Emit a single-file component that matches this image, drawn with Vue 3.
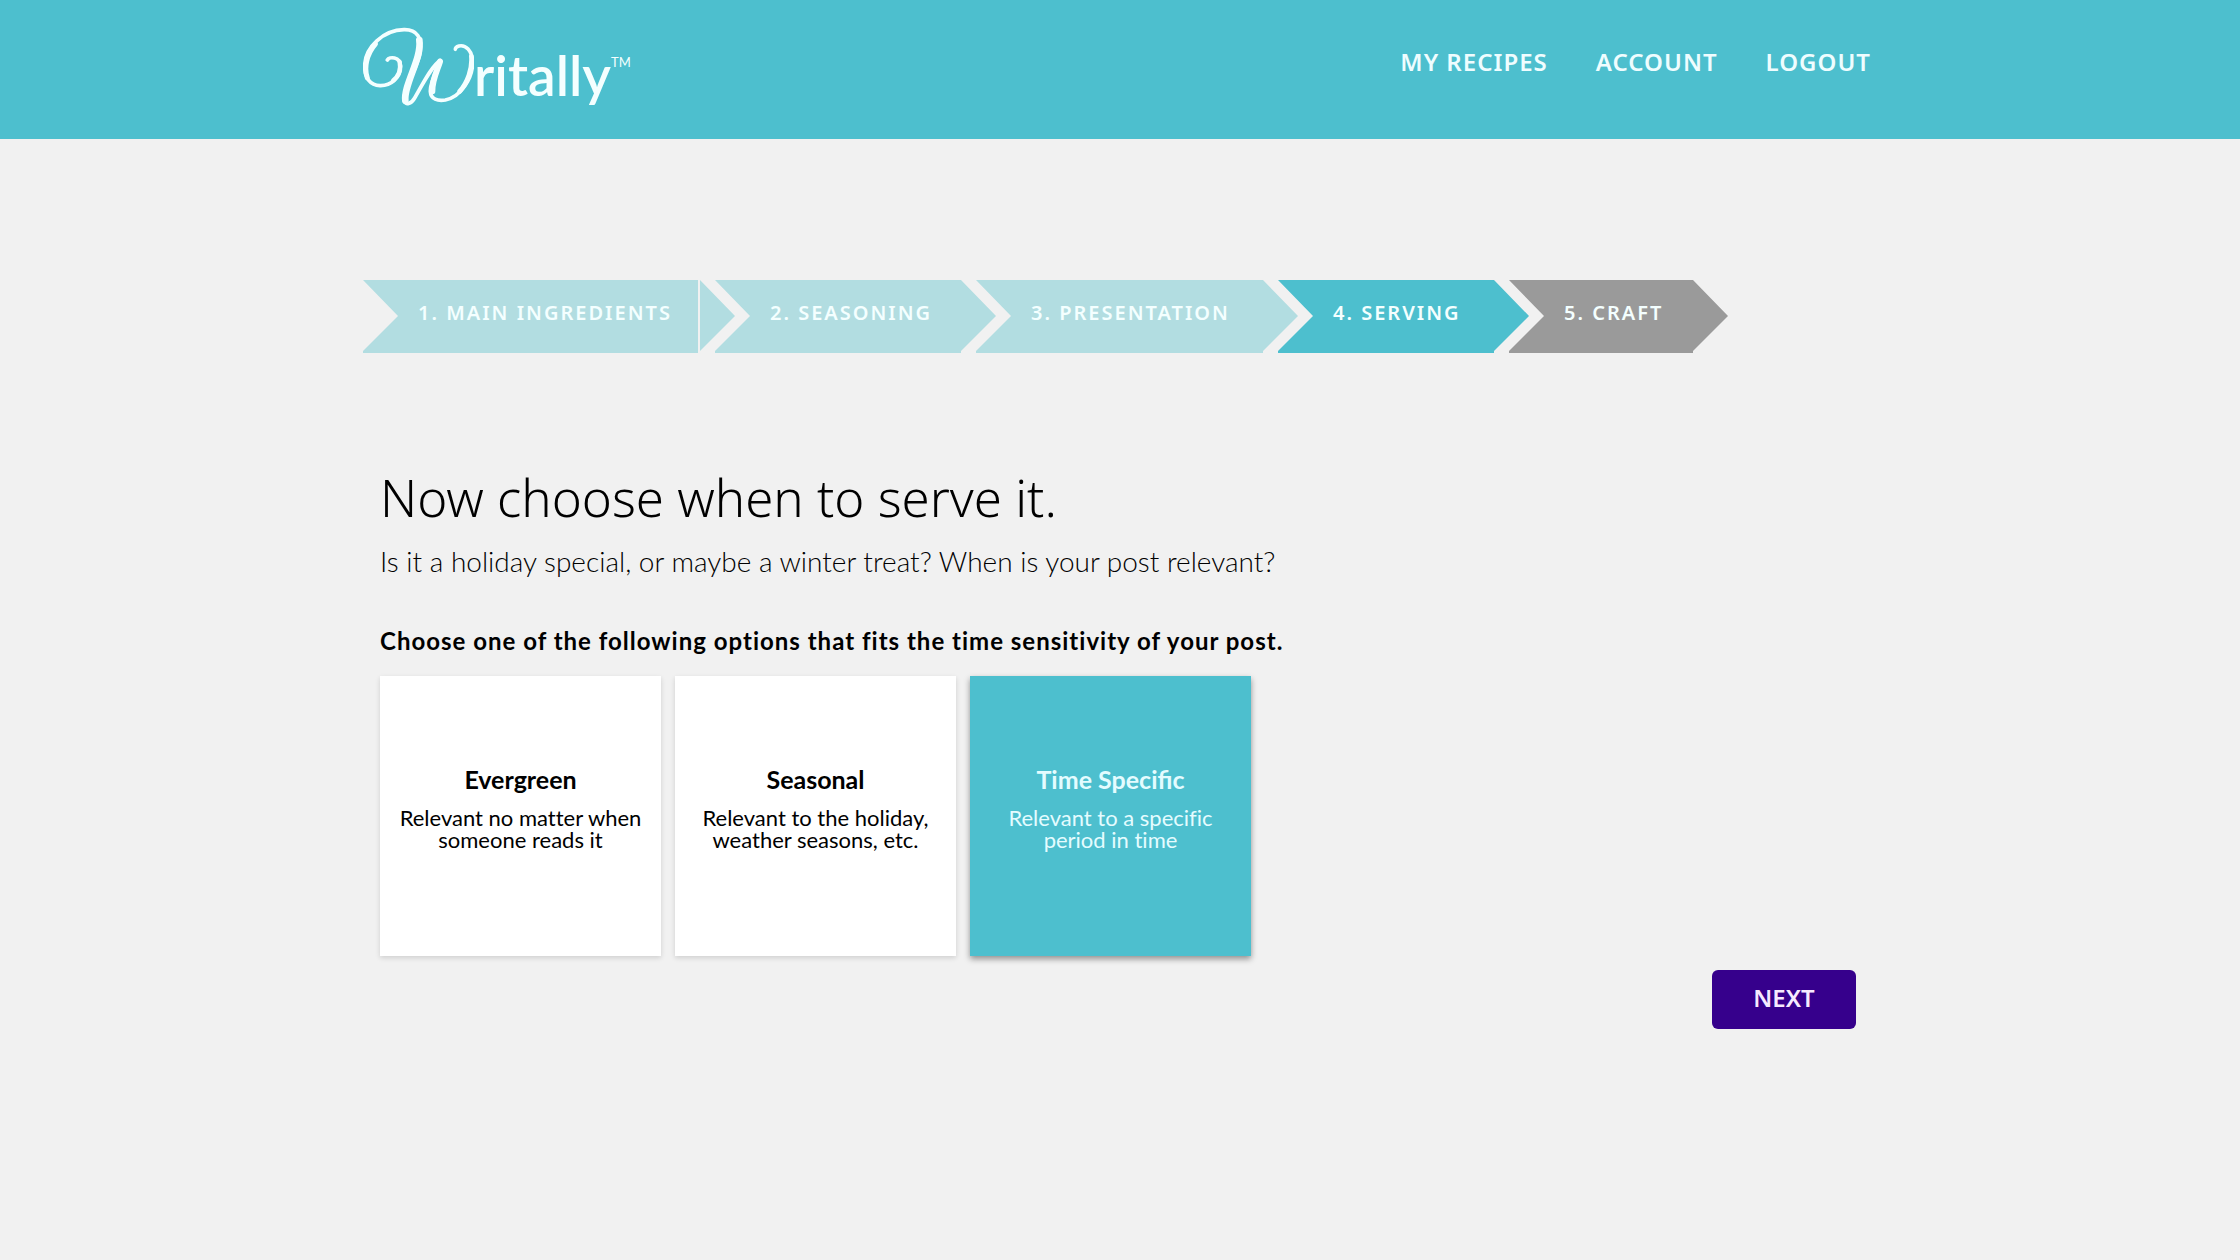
<script setup>
import { ref } from 'vue'

const links = ['My Recipes', 'Account', 'Logout']
const steps = [
  { label: '1. Main Ingredients', state: 'done', size: 'xl', divided: true },
  { label: '2. Seasoning', state: 'done', size: 'md' },
  { label: '3. Presentation', state: 'done', size: 'lg' },
  { label: '4. Serving', state: 'current', size: 'sm' },
  { label: '5. Craft', state: 'upcoming', size: 'xs' },
]
const options = [
  { id: 'evergreen', title: 'Evergreen', text: 'Relevant no matter when someone reads it' },
  { id: 'seasonal', title: 'Seasonal', text: 'Relevant to the holiday, weather seasons, etc.' },
  { id: 'specific', title: 'Time Specific', text: 'Relevant to a specific period in time' },
]
const chosen = ref('specific')
</script>

<template>
  <div class="page">
    <header class="bar">
      <div class="wrap bar-inner">
        <a class="logo" href="#" aria-label="Writally home">
          <svg class="swash" viewBox="15 0 333 270" aria-hidden="true">
            <!-- pen line -->
            <path stroke-width="11" d="M88 114C94 103 126 103 128 132C128 168 98 192 66 191C36 190 20 166 20 134C20 74 78 24 138 23C178 22 192 48 187 90C182 130 134 205 138 234C142 252 160 246 170 228C192 190 222 130 247 115C238 140 216 180 217 208C218 232 240 238 262 234C310 224 344 168 344 120C343 84 322 68 303 72C296 74 292 78 292 82" />
            <!-- broad parts of the stroke -->
            <path stroke-width="15" d="M28 168C18 140 24 98 52 66" />
            <path stroke-width="20" d="M184 54C192 110 136 190 142 236" />
            <path stroke-width="18" d="M246 119C238 145 222 175 223 208" />
            <path stroke-width="14" d="M340 102C344 140 328 182 305 208" />
            <path stroke-width="13" d="M125 120C130 145 118 165 105 176" />
          </svg>
          <span class="word">ritally</span><span class="tm">TM</span>
        </a>
        <nav class="nav">
          <a v-for="link in links" :key="link" href="#">{{ link }}</a>
        </nav>
      </div>
    </header>

    <main class="wrap">
      <ol class="steps">
        <li
          v-for="step in steps"
          :key="step.label"
          :class="['step', step.state, step.size, { divided: step.divided }]"
        >
          {{ step.label }}
        </li>
      </ol>

      <form class="content" @submit.prevent>
        <h1>Now choose when to serve it.</h1>
        <p class="lead">Is it a holiday special, or maybe a winter treat? When is your post relevant?</p>
        <fieldset>
          <legend>Choose one of the following options that fits the time sensitivity of your post.</legend>
          <div class="cards">
            <label v-for="o in options" :key="o.id" :class="['card', { active: chosen === o.id }]">
              <input v-model="chosen" type="radio" name="timing" :value="o.id" />
              <span class="card-title">{{ o.title }}</span>
              <span class="card-text">{{ o.text }}</span>
            </label>
          </div>
        </fieldset>
        <div class="actions">
          <button type="submit">Next</button>
        </div>
      </form>
    </main>
  </div>
</template>

<style>
body {
  background: #f1f1f1;
}
</style>

<style scoped>
.page {
  font-family: Lato, "Open Sans", sans-serif;
  color: #000;
}
.wrap {
  box-sizing: border-box;
  max-width: 1514px;
  margin: 0 auto;
}
.bar {
  background: #4dbfce;
}
.bar-inner {
  display: flex;
  justify-content: space-between;
  align-items: flex-start;
  min-height: 139px;
}
.logo {
  display: flex;
  align-items: flex-start;
  padding-top: 22px;
  color: #f4ffff;
  text-decoration: none;
}
.swash {
  width: 111px;
  height: 90px;
}
.swash path {
  fill: none;
  stroke: #f4ffff;
  stroke-linecap: round;
  stroke-linejoin: round;
}
.word {
  font-size: 55px;
  font-weight: 600;
  line-height: 106px;
}
.tm {
  font-size: 13px;
  line-height: 80px;
}
.nav {
  display: flex;
  gap: 48px;
  padding: 46px 6px 0 0;
}
.nav a {
  font-family: "Noto Sans", "Open Sans", sans-serif;
  font-size: 24px;
  font-weight: 600;
  line-height: 32px;
  letter-spacing: 1px;
  text-transform: uppercase;
  text-decoration: none;
  color: #effdff;
}
.steps {
  display: flex;
  gap: 15px;
  margin: 141px 0 0;
  padding: 0;
  list-style: none;
}
.step {
  --tip: 35px;
  box-sizing: border-box;
  flex: none;
  height: 73px;
  margin-right: calc(-1 * var(--tip));
  padding-left: 55px;
  font-family: "Noto Sans", "Open Sans", sans-serif;
  font-size: 20px;
  font-weight: 600;
  line-height: 66px;
  letter-spacing: 2px;
  text-transform: uppercase;
  white-space: nowrap;
  color: #f4ffff;
  clip-path: polygon(0 0, calc(100% - var(--tip)) 0, 100% 36px, calc(100% - var(--tip)) 71px, calc(100% - var(--tip)) 100%, 0 100%, 0 71px, var(--tip) 36px);
}
.xl { width: 372px; }
.md { width: 281px; }
.lg { width: 322px; }
.sm { width: 251px; }
.xs { width: 219px; }
.done { background: #b2dde1; }
.current { background: #4dbfce; }
.upcoming { background: #9a9a9a; }
.divided {
  background: linear-gradient(#f1f1f1, #f1f1f1) right 35px top / 2px 100% no-repeat #b2dde1;
}
.content {
  padding: 110px 21px 0 17px;
}
h1 {
  margin: 0;
  font-family: "Noto Sans", "Open Sans", sans-serif;
  font-size: 51px;
  font-weight: 300;
  line-height: 68px;
}
.lead {
  margin: 12px 0 0;
  font-size: 28px;
  font-weight: 300;
  line-height: 36px;
}
fieldset {
  margin: 46px 0 0;
  padding: 0;
  border: 0;
}
legend {
  padding: 0;
  font-size: 24px;
  font-weight: 700;
  line-height: 32px;
  letter-spacing: 1px;
}
.cards {
  display: flex;
  gap: 14px;
  margin-top: 19px;
}
.card {
  box-sizing: border-box;
  display: flex;
  flex-direction: column;
  width: 281px;
  height: 280px;
  padding: 87px 16px 0;
  text-align: center;
  background: #fff;
  box-shadow: 0 2px 5px rgba(0, 0, 0, 0.14);
  cursor: pointer;
}
.card input {
  position: absolute;
  opacity: 0;
}
.card-title {
  font-size: 25px;
  font-weight: 700;
  line-height: 32px;
}
.card-text {
  margin-top: 12px;
  font-size: 22px;
  line-height: 22px;
  font-variant-ligatures: none;
}
.card.active {
  background: #4dbfce;
  color: #e4fcff;
  box-shadow: 0 3px 6px rgba(0, 0, 0, 0.4);
}
.actions {
  display: flex;
  justify-content: flex-end;
  margin-top: 14px;
}
button {
  width: 144px;
  height: 59px;
  padding: 0 0 4px;
  border: 0;
  border-radius: 6px;
  background: #36008c;
  color: #f6eaff;
  font-family: "Noto Sans", "Open Sans", sans-serif;
  font-size: 24px;
  font-weight: 600;
  text-transform: uppercase;
}
</style>
